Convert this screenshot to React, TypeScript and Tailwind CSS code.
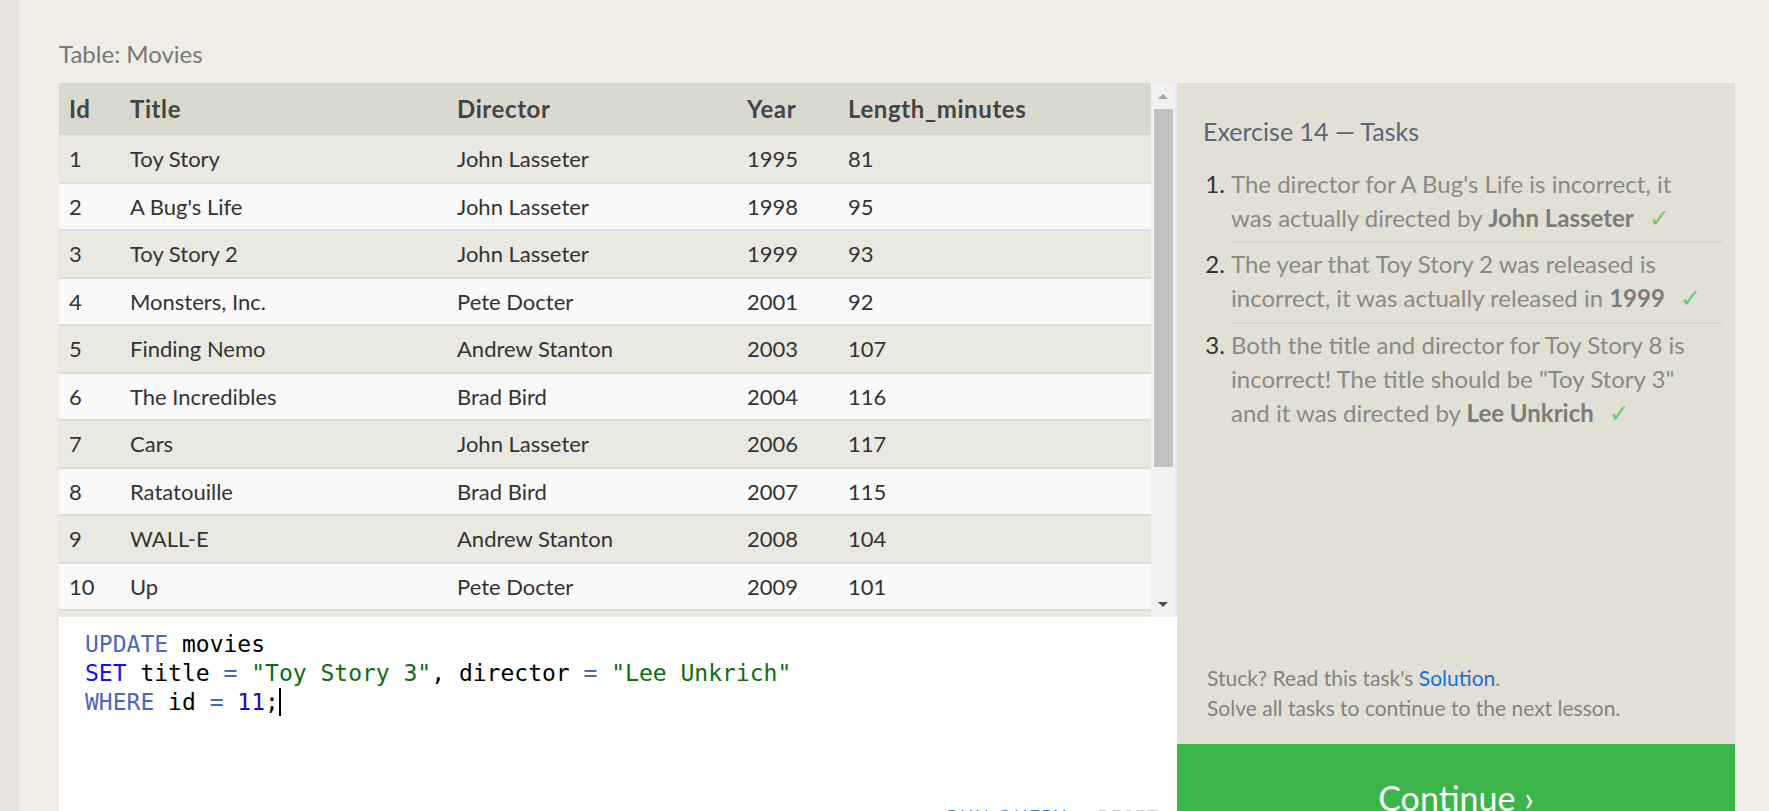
import React from "react";

type Movie = {
	id: number
	title: string
	director: string
	year: number
	length: number
}

const movies: Movie[] = [
	{ id: 1, title: "Toy Story", director: "John Lasseter", year: 1995, length: 81 },
	{ id: 2, title: "A Bug's Life", director: "John Lasseter", year: 1998, length: 95 },
	{ id: 3, title: "Toy Story 2", director: "John Lasseter", year: 1999, length: 93 },
	{ id: 4, title: "Monsters, Inc.", director: "Pete Docter", year: 2001, length: 92 },
	{ id: 5, title: "Finding Nemo", director: "Andrew Stanton", year: 2003, length: 107 },
	{ id: 6, title: "The Incredibles", director: "Brad Bird", year: 2004, length: 116 },
	{ id: 7, title: "Cars", director: "John Lasseter", year: 2006, length: 117 },
	{ id: 8, title: "Ratatouille", director: "Brad Bird", year: 2007, length: 115 },
	{ id: 9, title: "WALL-E", director: "Andrew Stanton", year: 2008, length: 104 },
	{ id: 10, title: "Up", director: "Pete Docter", year: 2009, length: 101 },
	{ id: 11, title: "Toy Story 3", director: "Lee Unkrich", year: 2010, length: 103 },
	{ id: 12, title: "Cars 2", director: "John Lasseter", year: 2011, length: 120 },
	{ id: 13, title: "Brave", director: "Brenda Chapman", year: 2012, length: 102 },
];

const font = "font-['Lato','Noto_Sans',sans-serif]";

// bold answer plus its tick, kept on one line
const Answer = (props: { text: string }) => (
	<span className="whitespace-nowrap">
		<b className="text-[#7c7b76]">{props.text}</b>
		<span className="ml-[15px] text-[#6cc97a] font-normal font-['DejaVu_Sans',sans-serif] text-[25px] leading-[20px]">✓</span>
	</span>
);

const Scrollbar = () => (
	<div className="w-[23px] h-full bg-[#f1f1f1] flex flex-col items-center">
		<div className="h-[26px] flex items-center justify-center">
			<div className="w-0 h-0 border-l-[5px] border-r-[5px] border-b-[5px] border-l-transparent border-r-transparent border-b-[#a3a3a3]" />
		</div>
		<div className="w-[19px] ml-[2px] h-[358px] bg-[#c1c1c1]" />
		<div className="flex-1" />
		<div className="h-[26px] flex items-center justify-center">
			<div className="w-0 h-0 border-l-[5px] border-r-[5px] border-t-[5px] border-l-transparent border-r-transparent border-t-[#505050]" />
		</div>
	</div>
);

const MoviesTable = () => (
	<div className="flex h-[534px]">
		<div className="w-[1092px] h-full overflow-hidden">
			<table className="w-full table-fixed border-collapse text-[22px] text-[#333]">
				<colgroup>
					<col className="w-[61px]" />
					<col className="w-[327px]" />
					<col className="w-[290px]" />
					<col className="w-[101px]" />
					<col />
				</colgroup>
				<thead>
					<tr className="h-[52px] bg-[#dad9cd] text-[#444] text-[24px] tracking-[0.6px] text-left">
						<th className="pl-[10px] font-bold">Id</th>
						<th className="pl-[10px] font-bold">Title</th>
						<th className="pl-[10px] font-bold">Director</th>
						<th className="pl-[10px] font-bold">Year</th>
						<th className="pl-[10px] font-bold">Length_minutes</th>
					</tr>
				</thead>
				<tbody>
					{movies.map((m, i) => (
						<tr key={m.id} className={"h-[47.5px] border-b-2 border-[#dfded6] " + (i % 2 == 0 ? "bg-[#eae9e1]" : "bg-[#f9f9f9]")}>
							<td className="pl-[10px]">{m.id}</td>
							<td className="pl-[10px]">{m.title}</td>
							<td className="pl-[10px]">{m.director}</td>
							<td className="pl-[10px]">{m.year}</td>
							<td className="pl-[10px]">{m.length}</td>
						</tr>
					))}
				</tbody>
			</table>
		</div>
		<Scrollbar />
	</div>
);

const Editor = () => (
	<div className="bg-white h-[260px] flex flex-col">
		<pre className="h-[186px] pt-[13px] pl-[26px] font-['DejaVu_Sans_Mono',monospace] text-[23px] leading-[29px] text-black">
			<span className="text-[#4a68b8]">UPDATE</span> movies{"\n"}
			<span className="text-[#1010ff]">SET</span> title <span className="text-[#4a68b8]">=</span> <span className="text-[#0b6d0b]">"Toy Story 3"</span>, director <span className="text-[#4a68b8]">=</span> <span className="text-[#0b6d0b]">"Lee Unkrich"</span>{"\n"}
			<span className="text-[#4a68b8]">WHERE</span> id <span className="text-[#4a68b8]">=</span> <span className="text-[#1010cc]">11</span>;<span className="inline-block w-[2px] h-[28px] bg-black align-[-6px]" />
		</pre>
		<div className={"flex justify-end gap-[30px] pr-[17px] text-[18px] tracking-[2px] " + font}>
			<span className="text-[#2a7ae2]">RUN QUERY</span>
			<span className="text-[#c8c8c8]">RESET</span>
		</div>
	</div>
);

const TasksPanel = () => (
	<div className="w-[558px] h-[728px] bg-[#e2e0d5] flex flex-col">
		<div className="pt-[32px] pl-[26px] pr-[13px] flex-1 flex flex-col">
			<h2 className="text-[25px] leading-[32px] text-[#5c6577]">Exercise 14 — Tasks</h2>
			<ol className="list-decimal pl-[28px] mt-[14px] text-[24px] leading-[34px] text-[#8a8983] marker:text-[#333]">
				<li className="pt-[6px] pb-[6px] pr-[12px] border-b-2 border-[#d6d4c9]">
					The director for A Bug's Life is incorrect, it was actually directed by <Answer text="John Lasseter" />
				</li>
				<li className="pt-[4px] pb-[7px] pr-[12px] border-b-2 border-[#d6d4c9]">
					The year that Toy Story 2 was released is incorrect, it was actually released in <Answer text="1999" />
				</li>
				<li className="pt-[4px] pb-[4px] pr-[12px]">
					Both the title and director for Toy Story 8 is incorrect! The title should be "Toy Story 3" and it was directed by <Answer text="Lee Unkrich" />
				</li>
			</ol>
			<div className="flex-1" />
			<div className="pl-[4px] pb-[21px] text-[21px] leading-[30px] text-[#86817c]">
				<p>Stuck? Read this task's <span className="text-[#1a6ed8]">Solution</span>.</p>
				<p>Solve all tasks to continue to the next lesson.</p>
			</div>
		</div>
		<div className="h-[67px] shrink-0 bg-[#3bb54a] text-white text-[34px] text-center pt-[33px] leading-[41px] whitespace-nowrap">
			Continue ›
		</div>
	</div>
);

export default function App(): JSX.Element {
	return (
		<div className={"w-[1769px] h-[811px] overflow-hidden flex bg-[#f0ede6] " + font}>
			<div className="w-[19px] h-full bg-[#e7e3de]" />
			<div className="pl-[40px] flex-1 h-full">
				<div className="h-[83px] flex items-end pb-[11px] text-[24px] text-[#777]">Table: Movies</div>
				<div className="flex items-start">
					<div className="w-[1118px] flex flex-col">
						<MoviesTable />
						<Editor />
					</div>
					<TasksPanel />
				</div>
			</div>
		</div>
	);
}
